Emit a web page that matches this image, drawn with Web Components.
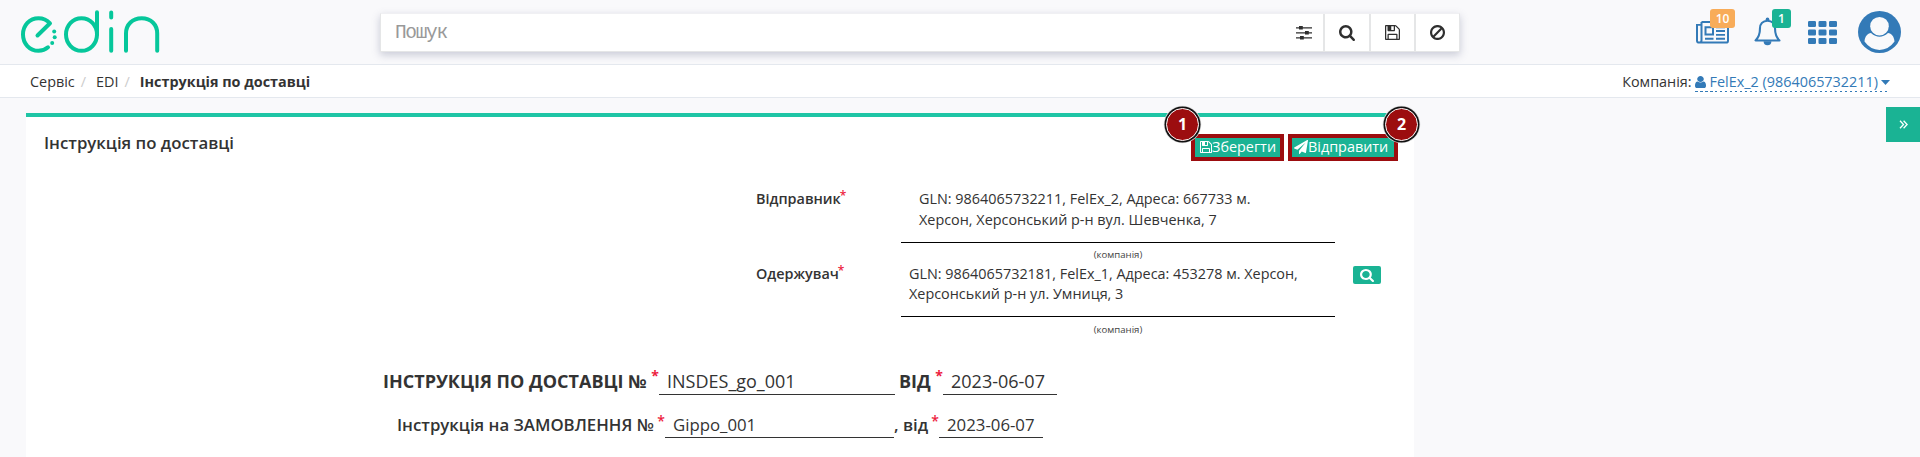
<!DOCTYPE html>
<html lang="uk"><head><meta charset="utf-8"><title>EDIN — Інструкція по доставці</title>
<style>
html,body{margin:0;height:100%}
body{background:#f9f9fb;font-family:"Open Sans","Noto Sans",sans-serif;font-size:14.4px;color:#333;overflow:hidden}
</style></head><body>
<edin-app></edin-app>
<script>
const define=(name,html)=>{
  const t=document.createElement('template');t.innerHTML=html;
  customElements.define(name,class extends HTMLElement{
    constructor(){super();this.attachShadow({mode:'open'}).append(t.content.cloneNode(true));}
  });
};
const ICONS={
  search:['64 128 1664 1664','<path d="M1216 832q0-185-131.5-316.5t-316.5-131.5-316.5 131.5-131.5 316.5 131.5 316.5 316.5 131.5 316.5-131.5 131.5-316.5zm512 832q0 52-38 90t-90 38q-54 0-90-38l-343-342q-179 124-399 124-143 0-273.5-55.5t-225-150-150-225-55.5-273.5 55.5-273.5 150-225 225-150 273.5-55.5 273.5 55.5 225 150 150 225 55.5 273.5q0 220-124 399l343 343q37 37 37 90z"/>'],
  save:['128 128 1536 1536','<path d="M512 1536h768v-384h-768v384zm896 0h128v-896q0-14-10-38.5t-20-34.5l-281-281q-10-10-34-20t-39-10v416q0 40-28 68t-68 28h-576q-40 0-68-28t-28-68v-416h-128v1280h128v-416q0-40 28-68t68-28h832q40 0 68 28t28 68v416zm-384-928v-320q0-13-9.5-22.5t-22.5-9.5h-192q-13 0-22.5 9.5t-9.5 22.5v320q0 13 9.5 22.5t22.5 9.5h192q13 0 22.5-9.5t9.5-22.5zm640 32v928q0 40-28 68t-68 28h-1344q-40 0-68-28t-28-68v-1344q0-40 28-68t68-28h928q40 0 88 20t76 48l280 280q28 28 48 76t20 88z"/>'],
  ban:['128 125 1536 1536','<path d="M1440 893q0-161-87-295l-754 753q137 89 297 89 111 0 211.5-43.5t173.5-116.5 116-174.5 43-212.5zm-999 299l755-754q-135-91-300-91-148 0-273 73t-198 199-73 274q0 162 89 299zm1223-299q0 157-61 300t-163.5 246-245 164-298.5 61-298.5-61-245-164-163.5-246-61-300 61-299.5 163.5-245.5 245-164 298.5-61 298.5 61 245 164 163.5 245.5 61 299.5z"/>'],
  user:['256 128 1280 1536','<path d="M1536 1399q0 109-62.5 187t-150.5 78h-854q-88 0-150.5-78t-62.5-187q0-85 8.5-160.5t31.5-152 58.5-131 94-89 134.5-34.5q131 128 313 128t313-128q76 0 134.5 34.5t94 89 58.5 131 31.5 152 8.5 160.5zm-256-887q0 159-112.5 271.5t-271.5 112.5-271.5-112.5-112.5-271.5 112.5-271.5 271.5-112.5 271.5 112.5 112.5 271.5z"/>'],
  plane:['0 0 1792 1792','<path d="M1764 11q33 24 27 64l-256 1536q-5 29-32 45-14 8-31 8-11 0-24-5l-453-185-242 295q-18 23-49 23-13 0-22-4-19-7-30.5-23.5t-11.5-36.5v-349l864-1059-1069 925-395-162q-37-14-40-55-2-40 32-59l1664-960q15-9 32-9 20 0 36 11z"/>'],
  sliders:['0 0 16 14','<path d="M0 1.2h16v1.3H0zM0 6.2h16v1.3H0zM0 11.2h16v1.3H0zM3 0h3.8v3.6H3zM9 5h3.8v3.6H9zM4 10h3.8v3.6H4z"/>'],
  news:['0 0 33 24','<g fill="none" stroke="currentColor" stroke-width="2"><path d="M5.5 1H31q1 0 1 1v18.5q0 2-2 2H3.5q-2.500 0-2.500-2V4h4M5.500 1v19q0 2.500-2 2.500"/><path d="M9.500 6.500h7.500v7.500H9.500z"/><path d="M20 6.500h9M20 10.500h9M20 14.500h9M9 18.500h8.500M20 18.500h9"/></g>'],
  bell:['0 0 27 30','<path d="M13.500 3.800C8.600 3.800 6 7.500 6 11.500 6 18 4 22 1.500 24.200h24C23 22 21 18 21 11.500 21 7.500 18.400 3.800 13.500 3.800z" fill="none" stroke="currentColor" stroke-width="2.100" stroke-linejoin="round"/><circle cx="13.500" cy="2.300" r="1.800"/><path d="M9.600 25h7.800a3.900 4.200 0 0 1-7.800 0z"/>'],
  th:['0 0 29 23','<path d="M1.300 0h5.400q1.300 0 1.300 1.300v3.400q0 1.300-1.300 1.300h-5.400q-1.300 0-1.300-1.300v-3.400q0-1.300 1.300-1.300z" id="c"/><use href="#c" x="10.500"/><use href="#c" x="21"/><use href="#c" y="8.500"/><use href="#c" x="10.500" y="8.500"/><use href="#c" x="21" y="8.500"/><use href="#c" y="17"/><use href="#c" x="10.500" y="17"/><use href="#c" x="21" y="17"/>'],
  avatar:['0 0 43 42','<ellipse cx="21.500" cy="21" rx="21.500" ry="21"/><path d="M6.500 30.500C7 25 9.500 22.500 13 22q8.500 7.500 17 0c3.500.5 6 3 6.500 8.500Q30.500 38.900 21.500 38.900T6.500 30.500z" fill="#f9f9fb"/><circle cx="21.500" cy="15.200" r="9.300" fill="#f9f9fb"/>'],
  angles:['0 0 9 9','<path d="M1 .8l3.500 3.700L1 8.200M4.600.8l3.500 3.700-3.500 3.700" fill="none" stroke="currentColor" stroke-width="1.300"/>'],
  caret:['0 0 8 4','<path d="M0 0h8L4 4z"/>']
};
customElements.define('ui-icon',class extends HTMLElement{
  constructor(){super();this.attachShadow({mode:'open'});}
  connectedCallback(){
    const [vb,body]=ICONS[this.getAttribute('name')];
    this.shadowRoot.innerHTML=`<style>:host{display:inline-block;flex:none;line-height:0}svg{display:block;width:100%;height:100%;fill:currentColor}</style><svg viewBox="${vb}" preserveAspectRatio="none">${body}</svg>`;
  }
});
define('edin-logo',`<style>:host{display:block;width:140px;height:44px}svg{display:block}</style>
<svg width="140" height="44" viewBox="20 10 140 44" fill="none" stroke="#06c79b" stroke-width="4" stroke-linecap="round" stroke-linejoin="round">
<path d="M37.500 35.500L50 23.300C46.500 19.500 42.500 18.200 38.500 18.200C29.500 18.200 23 25.500 23 34.500S29.500 50.800 38.500 50.800C42.500 50.800 45.500 49.500 48 47.300"/>
<ellipse cx="81.500" cy="34.500" rx="15.500" ry="16.300"/><path d="M97 12.200V34.500M111.200 12.500V17.500M111.200 29V50.800M126 50.800V33.500C126 24.500 132.500 18.300 141.700 18.300S157.200 24.500 157.200 33.500V50.800"/>
<g fill="#06c79b" stroke="none"><circle cx="54.200" cy="31.500" r="2"/><circle cx="54.700" cy="37.300" r="2"/><circle cx="52.200" cy="43" r="2"/></g></svg>`);
define('search-bar',`<style>:host{display:flex;width:1080px;height:39px;background:#fff;box-sizing:border-box;border:1px solid #e5e6e7;border-top-color:#f0f0f3;box-shadow:0 3px 8px rgba(100,105,140,.32);color:#2f2f2f}
.q{flex:1;padding-left:14px;font:19.5px/39px "Liberation Mono",monospace;letter-spacing:-1.350px;color:#999}
div{display:flex;align-items:center;justify-content:center;border-left:2px solid #e5e6e7;box-sizing:border-box}
.s{align-self:center;margin-right:11px;width:16px;height:14px}.i{width:15px;height:15px;margin-bottom:1px}</style>
<span class="q">Пошук</span><ui-icon class="s" name="sliders"></ui-icon>
<div style="width:46px"><ui-icon style="width:16px;height:16px" name="search"></ui-icon></div><div style="width:45px"><ui-icon class="i" name="save"></ui-icon></div><div style="width:45px"><ui-icon class="i" name="ban"></ui-icon></div>`);
define('icon-badge',`<style>:host{display:block;position:relative;color:#337ab7}
b{position:absolute;left:var(--x);top:var(--y);width:var(--w);height:19px;border-radius:3px;background:var(--c);color:#fff;font:600 12px/19px "Open Sans",sans-serif;text-align:center}</style><slot></slot><b><slot name="count"></slot></b>`);
define('app-header',`<style>:host{display:flex;height:64px;border-bottom:1px solid #e4e8ee;color:#337ab7}
edin-logo{margin:10px 0 0 20px}search-bar{margin:13px 0 0 220px}
.n{margin:21px 0 0 236px;width:33px;height:23px}.b{margin:17px 0 0 25px;width:27px;height:29px}
.t{margin:21px 0 0 27px;width:29px;height:23px}.a{margin:11px 0 0 21px;width:43px;height:42px}
ui-icon{display:block}icon-badge>ui-icon{width:100%;height:100%}</style>
<edin-logo></edin-logo><search-bar></search-bar>
<icon-badge class="n" style="--x:14px;--y:-12px;--w:25px;--c:#f8ac59"><ui-icon name="news"></ui-icon><span slot="count">10</span></icon-badge>
<icon-badge class="b" style="--x:18px;--y:-8px;--w:19px;--c:#1ab394"><ui-icon name="bell"></ui-icon><span slot="count">1</span></icon-badge>
<ui-icon class="t" name="th"></ui-icon><ui-icon class="a" name="avatar"></ui-icon>`);
define('crumb-bar',`<style>:host{display:flex;height:32px;line-height:34px;background:#fff;border-bottom:1px solid #e4e8ee;white-space:nowrap}
.c{padding-left:30px}.c i{color:#ccc;font-style:normal;margin:0 10px 0 6px}.c b{font-weight:700}
.r{margin-left:auto;margin-right:30px;display:flex}.l{margin-left:3px;height:27px;color:#337ab7;display:flex;background:repeating-linear-gradient(90deg,#337ab7 0 2.500px,transparent 2.500px 5px) 0 100%/100% 1px no-repeat}
.u{width:11px;height:12px;margin:11px 4px 0 0}.d{width:9px;height:5px;margin:15px 0 0 3px}</style>
<div class="c"><span>Сервіс</span><i>/</i><span>EDI</span><i>/</i><b>Інструкція по доставці</b></div>
<div class="r"><span>Компанія:</span><span class="l"><ui-icon class="u" name="user"></ui-icon><span>FelEx_2 (9864065732211)</span><ui-icon class="d" name="caret"></ui-icon></span></div>`);
define('action-button',`<style>:host{display:flex;box-sizing:border-box;height:27px;border:4px solid #9c0d0f;background:#1ab394;color:#fff;position:relative;line-height:18px;white-space:nowrap;padding-left:var(--p)}
b{position:absolute;left:var(--x);top:-30.500px;width:31px;height:31px;border-radius:50%;background:#9c0d0f;border:1px solid #fff;box-shadow:0 0 0 1.500px #111,0 0 0 2.300px #ddd;font:700 16px/31px "Open Sans",sans-serif;text-align:center}</style><slot></slot><b><slot name="step"></slot></b>`);
define('party-row',`<style>:host{display:grid;grid-template-columns:145px 434px 18px 28px;height:75px;margin-left:730px;line-height:20px}
.l{font-weight:600}.l sup{color:#ed1c40;font-size:12px;font-weight:600;line-height:0;vertical-align:baseline;position:relative;top:-4px;margin-left:-1px}
.v{height:var(--h);margin-top:var(--m,0px);border-bottom:1px solid #000;padding-left:var(--p);line-height:var(--lh);white-space:nowrap}
.n{font-size:9.600px;line-height:14px;text-align:center;margin-top:var(--g,5px);color:#444}
.k{grid-column:4}</style><div class="l"><slot name="label"></slot><sup>*</sup></div><div><div class="v"><slot></slot></div><div class="n">(компанія)</div></div><div class="k"><slot name="action"></slot></div>`);
define('lookup-button',`<style>:host{display:flex;width:28px;height:18px;margin-top:2px;border-radius:2px;background:#1ab394;color:#fff;align-items:center;justify-content:center}ui-icon{width:14px;height:13px}</style><ui-icon name="search"></ui-icon>`);
define('doc-line',`<style>:host{display:flex;white-space:nowrap}</style><slot></slot>`);
define('line-label',`<style>:host{display:block;flex:none;font-weight:var(--wt);line-height:var(--lh,30px);height:30px;position:relative}i{position:absolute;right:0;top:var(--st);font-size:14px;color:#ed1c40;font-style:normal}</style><slot></slot><i>*</i>`);
define('line-field',`<style>:host{display:block;flex:none;line-height:var(--lh,30px);height:29px;border-bottom:1px solid #333;box-sizing:border-box}</style><slot></slot>`);
define('doc-panel',`<style>:host{display:block;width:1388px;height:344px;margin:15px 0 0 26px;box-sizing:border-box;border-top:4px solid #1fc5a5;background:#fff;flex:none}
header{display:flex;height:61px}h1{margin:14px 0 0 18px;font:600 16.800px/24px "Open Sans",sans-serif;width:1147px}
action-button{margin-top:17px;flex:none}.i{width:12px;height:12px;margin:3px 0 0 0}.p{width:14px;height:14px;margin:2px 0 0 0}</style>
<header><h1>Інструкція по доставці</h1>
<action-button style="width:93px;--p:5px;--x:-29px"><ui-icon class="i" name="save"></ui-icon><span>Зберегти</span><span slot="step">1</span></action-button>
<action-button style="width:110px;margin-left:4px;--p:2px;--x:93px"><ui-icon class="p" name="plane"></ui-icon><span>Відправити</span><span slot="step">2</span></action-button></header>
<party-row style="margin-top:11px;--m:-1px;--h:54px;--p:18px;--lh:21px"><span slot="label">Відправник</span>GLN: 9864065732211, FelEx_2, Адреса: 667733 м.<br>Херсон, Херсонський р-н вул. Шевченка, 7</party-row>
<party-row style="--h:52px;--p:8px;--lh:20px;--g:6px"><span slot="label">Одержувач</span>GLN: 9864065732181, FelEx_1, Адреса: 453278 м. Херсон,<br>Херсонський р-н ул. Умниця, 3<lookup-button slot="action"></lookup-button></party-row>
<doc-line style="margin:27px 0 0 357px;font-size:18px;--wt:700;--st:-5px"><line-label style="width:276px">ІНСТРУКЦІЯ ПО ДОСТАВЦІ №</line-label><line-field style="width:236px;padding-left:8px">INSDES_go_001</line-field><line-label style="margin-left:4px;width:44px">ВІД</line-label><line-field style="width:114px;padding-left:8px">2023-06-07</line-field></doc-line>
<doc-line style="margin:13px 0 0 371px;font-size:16.800px;--wt:600;--st:-4px;--lh:32px"><line-label style="width:268px">Інструкція на ЗАМОВЛЕННЯ №</line-label><line-field style="width:229px;padding-left:8px">Gippo_001</line-field><line-label style="width:45px">, від</line-label><line-field style="width:104px;padding-left:8px">2023-06-07</line-field></doc-line>`);
define('edin-app',`<style>:host{display:flex;flex-direction:column;height:457px;overflow:hidden}main{display:flex}
aside{display:flex;align-items:center;justify-content:center;width:34px;height:35px;background:#1ab394;color:#fff;margin:9px 0 0 auto}
aside ui-icon{width:9px;height:9px}</style>
<app-header></app-header><crumb-bar></crumb-bar><main><doc-panel></doc-panel><aside><ui-icon name="angles"></ui-icon></aside></main>`);
</script></body></html>
